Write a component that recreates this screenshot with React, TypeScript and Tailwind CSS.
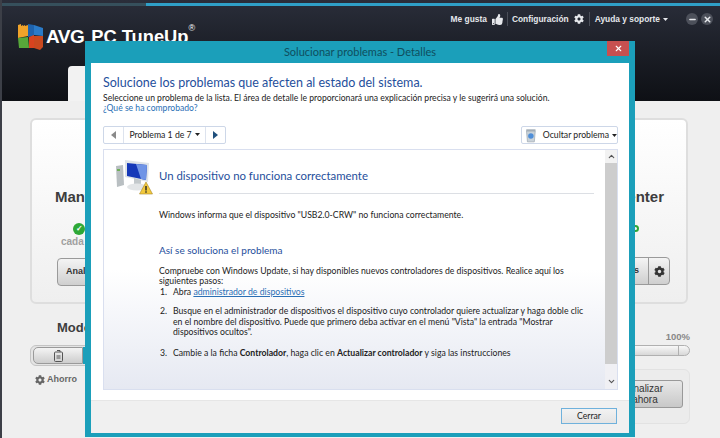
import { FaCog, FaThumbsUp } from "react-icons/fa";
import { ChevronDown, ChevronUp, X, Minus } from "lucide-react";

const ui = { fontFamily: 'Lato, "Open Sans", sans-serif' };
const appFont = { fontFamily: '"Liberation Sans", Arial, sans-serif' };

function Caret({ className = "" }: { className?: string }) {
  return (
    <svg width="5" height="3" viewBox="0 0 5 3" className={className}>
      <path d="M0 0h5L2.5 3z" fill="currentColor" />
    </svg>
  );
}

function AvgFlag() {
  return (
    <svg width="28" height="29" viewBox="0 0 28 29">
      <path d="M1 3l3-1v2l2-1v1l2-1v1l3-1 0 11-10 2z" fill="#f0a32a" />
      <path d="M11 2l6 1 0 11-6 1z" fill="#1f63ad" />
      <path d="M17 3l9 3 0 8-9-1z" fill="#2a7bc8" />
      <path d="M1 16l10-1 1 11-10 0z" fill="#57a83a" />
      <path d="M12 15l5-2 0 13-5 0z" fill="#d8431f" />
      <path d="M17 14l9 0 0 11-3 3-6-2z" fill="#c9491f" />
    </svg>
  );
}

function DeviceIcon() {
  return (
    <svg width="38" height="36" viewBox="0 0 38 36">
      <path d="M1 7l7-1 1 20-7 2z" fill="#b9bfc2" />
      <rect x="2" y="10" width="3" height="2" fill="#6fae5a" />
      <path d="M10 1l24 3-1 19-23-5z" fill="#dfe4e8" />
      <path d="M12 4l20 2-1 15-19-4z" fill="#1538b8" />
      <path d="M21 5l11 1-1 15-5-1z" fill="#6f94e6" />
      <path d="M19 19l7 2 0 5-7-1z" fill="#c3c9cc" />
      <ellipse cx="22" cy="28" rx="10" ry="3.500" fill="#e2e5e7" />
      <path d="M31 23l6.500 12h-13z" fill="#f2c93c" stroke="#a8862a" strokeWidth="0.6" />
      <rect x="30.300" y="27" width="1.400" height="4.500" fill="#222" />
      <rect x="30.300" y="32.300" width="1.400" height="1.400" fill="#222" />
    </svg>
  );
}

function RecycleIcon() {
  return (
    <svg width="12" height="15" viewBox="0 0 12 15">
      <rect x="1" y="1" width="10" height="2" rx="1" fill="#a9b4bd" />
      <path d="M1.500 3h9l-1 11h-7z" fill="#c9d2d9" stroke="#8e9aa5" strokeWidth="0.6" />
      <circle cx="6" cy="8" r="2.800" fill="#4f8ed8" />
    </svg>
  );
}

function BatteryIcon() {
  return (
    <svg width="9" height="12" viewBox="0 0 9 12" fill="none" stroke="#555">
      <path d="M3 .5h3v1.500" />
      <rect x="0.500" y="2" width="8" height="9.500" rx="1" />
      <path d="M2.500 6h4M2.500 8h4" />
    </svg>
  );
}

function Background() {
  return (
    <div className="flex h-full flex-col border-l-2 border-[#3c3f47]" style={appFont}>
      <header className="relative h-[101px] bg-gradient-to-b from-[#2a2e3a] to-[#0e1015]">
        <div className="mt-[3px] flex h-[3px]">
          <div className="w-[144px] bg-[#36505c]" />
          <div className="flex-1 bg-[#2fa0c8]" />
        </div>
        <div className="flex items-center pl-[15px] pt-[16px]">
          <AvgFlag />
          <span className="ml-[1px] text-[19px] font-bold tracking-[-0.5px] text-white">AVG</span>
          <span className="ml-[7px] text-[18.300px] font-bold leading-none text-white">PC TuneUp</span>
          <span className="mb-[16px] text-[9px] text-white">®</span>
        </div>
        <nav className="absolute right-[7px] top-[12px] flex h-[14px] items-center text-[8.400px] font-bold text-[#e6e8ec]">
          <span>Me gusta</span>
          <FaThumbsUp size={11} className="ml-[5px]" />
          <span className="mx-[4px] h-[14px] w-px bg-[#4a4e58]" />
          <span>Configuración</span>
          <FaCog size={10} className="ml-[5px]" />
          <span className="mx-[5px] h-[14px] w-px bg-[#4a4e58]" />
          <span>Ayuda y soporte</span>
          <Caret className="ml-[3px]" />
          <span className="ml-[18px] flex h-[12px] w-[12px] items-center justify-center rounded-full bg-[#4c505a]">
            <Minus size={9} strokeWidth={4} />
          </span>
          <span className="ml-[3px] flex h-[12px] w-[12px] items-center justify-center rounded-full bg-[#4c505a]">
            <X size={9} strokeWidth={4} />
          </span>
        </nav>
        <div className="absolute bottom-0 left-[66px] h-[35px] w-[40px] rounded-tl-[4px] bg-[#f2f2f2]" />
      </header>

      <main className="flex-1 bg-[#efefef] pl-[28px] pr-[30px] pt-[17px]">
        <section className="mr-[2px] flex h-[186px] justify-between rounded-[6px] border-2 border-[#dedede] bg-gradient-to-b from-white to-[#efefef] pl-[23px] pr-[16px] pt-[68px]">
          <div className="w-[120px]">
            <div className="text-[15px] font-bold leading-[18px] text-[#3d3d3d]">Mantenimiento</div>
            <div className="ml-[18px] mt-[17px] flex h-[12px] w-[12px] items-center justify-center rounded-full bg-[#2ea836] text-[8px] font-bold text-white">✓</div>
            <div className="ml-[6px] text-[10px] font-bold leading-[14px] text-[#a0a0a0]">cada día</div>
            <div className="ml-[2px] mt-[9px] flex h-[28px] w-[70px] items-center rounded-[4px] border border-[#9a9a9a] bg-gradient-to-b from-[#f4f4f4] to-[#cfcfcf] pl-[8px] text-[9px] font-bold text-[#333]">Analizar</div>
          </div>
          <div className="flex w-[80px] flex-col items-end">
            <div className="mr-[6px] whitespace-nowrap text-[15px] font-bold leading-[18px] text-[#3d3d3d]">Center</div>
            <div className="mr-[31px] mt-[19px] h-[7px] w-[7px] rounded-full border-2 border-[#2ea836]" />
            <div className="h-[14px]" />
            <div className="mt-[11px] flex h-[28px] w-[60px] items-center rounded-[4px] border border-[#9a9a9a] bg-gradient-to-b from-[#f4f4f4] to-[#cfcfcf] text-[9px] font-bold text-[#333]">
              <span className="w-[37px] pr-[9px] text-right">s</span>
              <span className="flex h-full flex-1 items-center justify-center border-l border-[#9a9a9a]">
                <FaCog size={11} />
              </span>
            </div>
          </div>
        </section>

        <section className="flex justify-between">
          <div className="w-[100px]">
            <div className="ml-[27px] mt-[15px] text-[13px] font-bold leading-[18px] text-[#3d3d3d]">Modo</div>
            <div className="mt-[8px] flex h-[21px] items-center rounded-[6px] border border-[#c4c4c4] bg-[#e4e4e4] pl-[2px]">
              <div className="flex h-[17px] w-[50px] items-center justify-center rounded-l-[5px] border border-[#9a9a9a] bg-gradient-to-b from-[#f4f4f4] to-[#cdcdcd]">
                <BatteryIcon />
              </div>
              <div className="h-[17px] flex-1 bg-[#1b9fba]" />
            </div>
            <div className="ml-[5px] mt-[7px] flex items-center gap-[2px] text-[9px] font-bold text-[#666]">
              <FaCog size={10} />
              Ahorro
            </div>
          </div>
          <div className="flex w-[100px] flex-col items-end">
            <div className="mt-[27px] text-[9.500px] font-bold leading-[12px] text-[#888]">100%</div>
            <div className="mt-[2px] flex h-[11px] w-full justify-end overflow-hidden rounded-r-full border border-[#b0b0b0] bg-gradient-to-b from-[#f8f8f8] to-[#d8d8d8]">
              <span className="w-[11px] border-l border-[#b0b0b0]" />
            </div>
            <div className="mt-[13px] flex h-[55px] w-full justify-end rounded-[6px] border border-[#e2e2e2] bg-[#ececec] pr-[6px] pt-[10px]">
              <div className="flex h-[28px] w-full items-center justify-end rounded-[3px] border border-[#999] bg-gradient-to-b from-[#e8e8e8] to-[#c8c8c8] pr-[19px] text-center text-[10px] leading-[11px] text-[#333]">
                Analizar<br />ahora
              </div>
            </div>
          </div>
        </section>
      </main>
    </div>
  );
}

function Dialog() {
  return (
    <div
      className="absolute left-[85px] top-[41px] flex h-[396px] w-[550px] flex-col bg-[#1b9fba] px-[6px] pb-[4px]"
      style={ui}
    >
      <div className="relative flex h-[22px] shrink-0 items-center justify-center text-[11px] text-[#0f4e5e]">
        Solucionar problemas - Detalles
        <span className="absolute right-0 top-0 flex h-[15px] w-[22px] items-center justify-center bg-[#c75050] text-white">
          <X size={9} strokeWidth={3} />
        </span>
      </div>

      <div className="flex min-h-0 flex-1 flex-col bg-white">
        <div className="flex-1 pl-[12px] pr-[11px] pt-[11px]">
          <h1 className="text-[12.500px] leading-[17px] text-[#1f4f9c]">
            Solucione los problemas que afecten al estado del sistema.
          </h1>
          <p className="mt-[2px] text-[8.600px] leading-[10px] text-[#222]">
            Seleccione un problema de la lista. El área de detalle le proporcionará una explicación precisa y le sugerirá una solución.
          </p>
          <p className="text-[8.600px] leading-[10px] text-[#2a6fb5]">¿Qué se ha comprobado?</p>

          <div className="mt-[13px] flex items-center justify-between">
            <div className="flex h-[18px] w-[123px] items-center rounded-[2px] border border-[#cdd7e8] text-[8.700px] text-[#222]">
              <span className="flex h-full w-[20px] items-center justify-center border-r border-[#dde3ee]">
                <svg width="5" height="8" viewBox="0 0 5 8"><path d="M5 0v8L0 4z" fill="#8a8a8a" /></svg>
              </span>
              <span className="flex flex-1 items-center justify-center gap-[3px] whitespace-nowrap">
                Problema 1 de 7 <Caret />
              </span>
              <span className="flex h-full w-[20px] items-center justify-center border-l border-[#dde3ee]">
                <svg width="5" height="8" viewBox="0 0 5 8"><path d="M0 0v8l5-4z" fill="#1f4f7c" /></svg>
              </span>
            </div>
            <div className="flex h-[18px] w-[97px] items-center gap-[3px] whitespace-nowrap rounded-[2px] border border-[#cdd7e8] pl-[3px] text-[8.700px] text-[#222]">
              <RecycleIcon />
              <span className="ml-[3px]">Ocultar problema</span> <Caret />
            </div>
          </div>

          <div className="mt-[5px] flex h-[241px] border border-[#d9dfef] bg-gradient-to-b from-white via-white to-[#e6e9f2]">
            <div className="flex-1 pl-[11px] pr-[11px] pt-[9px]">
              <div className="flex items-start">
                <DeviceIcon />
                <div className="ml-[6px] flex-1">
                  <div className="mt-[8px] border-b border-[#dcdfe4] pb-[9px] text-[11.400px] leading-[17px] text-[#1f4f9c]">
                    Un dispositivo no funciona correctamente
                  </div>
                </div>
              </div>
              <div className="pl-[44px] text-[8.700px] leading-[10.500px] text-[#222]">
                <p className="mt-[15px]">Windows informa que el dispositivo "USB2.0-CRW" no funciona correctamente.</p>
                <p className="mt-[22px] text-[10px] leading-[14px] text-[#1f4f9c]">Así se soluciona el problema</p>
                <p className="mt-[9px]">
                  Compruebe con Windows Update, si hay disponibles nuevos controladores de dispositivos. Realice aquí los siguientes pasos:
                </p>
                <ol>
                  <li className="flex">
                    <span className="w-[14px] shrink-0 pl-[1px]">1.</span>
                    <span>Abra <span className="text-[#2a6fb5] underline">administrador de dispositivos</span></span>
                  </li>
                  <li className="mt-[9px] flex">
                    <span className="w-[14px] shrink-0 pl-[1px]">2.</span>
                    <span>
                      Busque en el administrador de dispositivos el dispositivo cuyo controlador quiere actualizar y haga doble clic en el nombre del dispositivo. Puede que primero deba activar en el menú "Vista" la entrada "Mostrar dispositivos ocultos".
                    </span>
                  </li>
                  <li className="mt-[10px] flex">
                    <span className="w-[14px] shrink-0 pl-[1px]">3.</span>
                    <span>Cambie a la ficha <b>Controlador</b>, haga clic en <b>Actualizar controlador</b> y siga las instrucciones</span>
                  </li>
                </ol>
              </div>
            </div>
            <div className="flex w-[12px] shrink-0 flex-col bg-[#cdcdcd] text-[#555]">
              <div className="flex h-[13px] items-center justify-center bg-[#f2f2f2]">
                <ChevronUp size={9} strokeWidth={3} />
              </div>
              <div className="flex-1" />
              <div className="flex h-[25px] items-end justify-center bg-[#f0f0f4] pb-[3px]">
                <ChevronDown size={9} strokeWidth={3} />
              </div>
            </div>
          </div>
        </div>

        <div className="flex h-[33px] shrink-0 items-start justify-end border-t border-[#e6e6e6] bg-[#f0f0f0] pr-[12px] pt-[7px]">
          <button className="h-[16px] w-[56px] border border-[#6fb1dc] bg-gradient-to-b from-[#f2f2f2] to-[#e4e4e4] text-[8.700px] leading-none text-[#222]">
            Cerrar
          </button>
        </div>
      </div>
    </div>
  );
}

export default function App() {
  return (
    <div className="relative h-[438px] w-[720px] overflow-hidden bg-[#efefef]">
      <Background />
      <Dialog />
    </div>
  );
}
